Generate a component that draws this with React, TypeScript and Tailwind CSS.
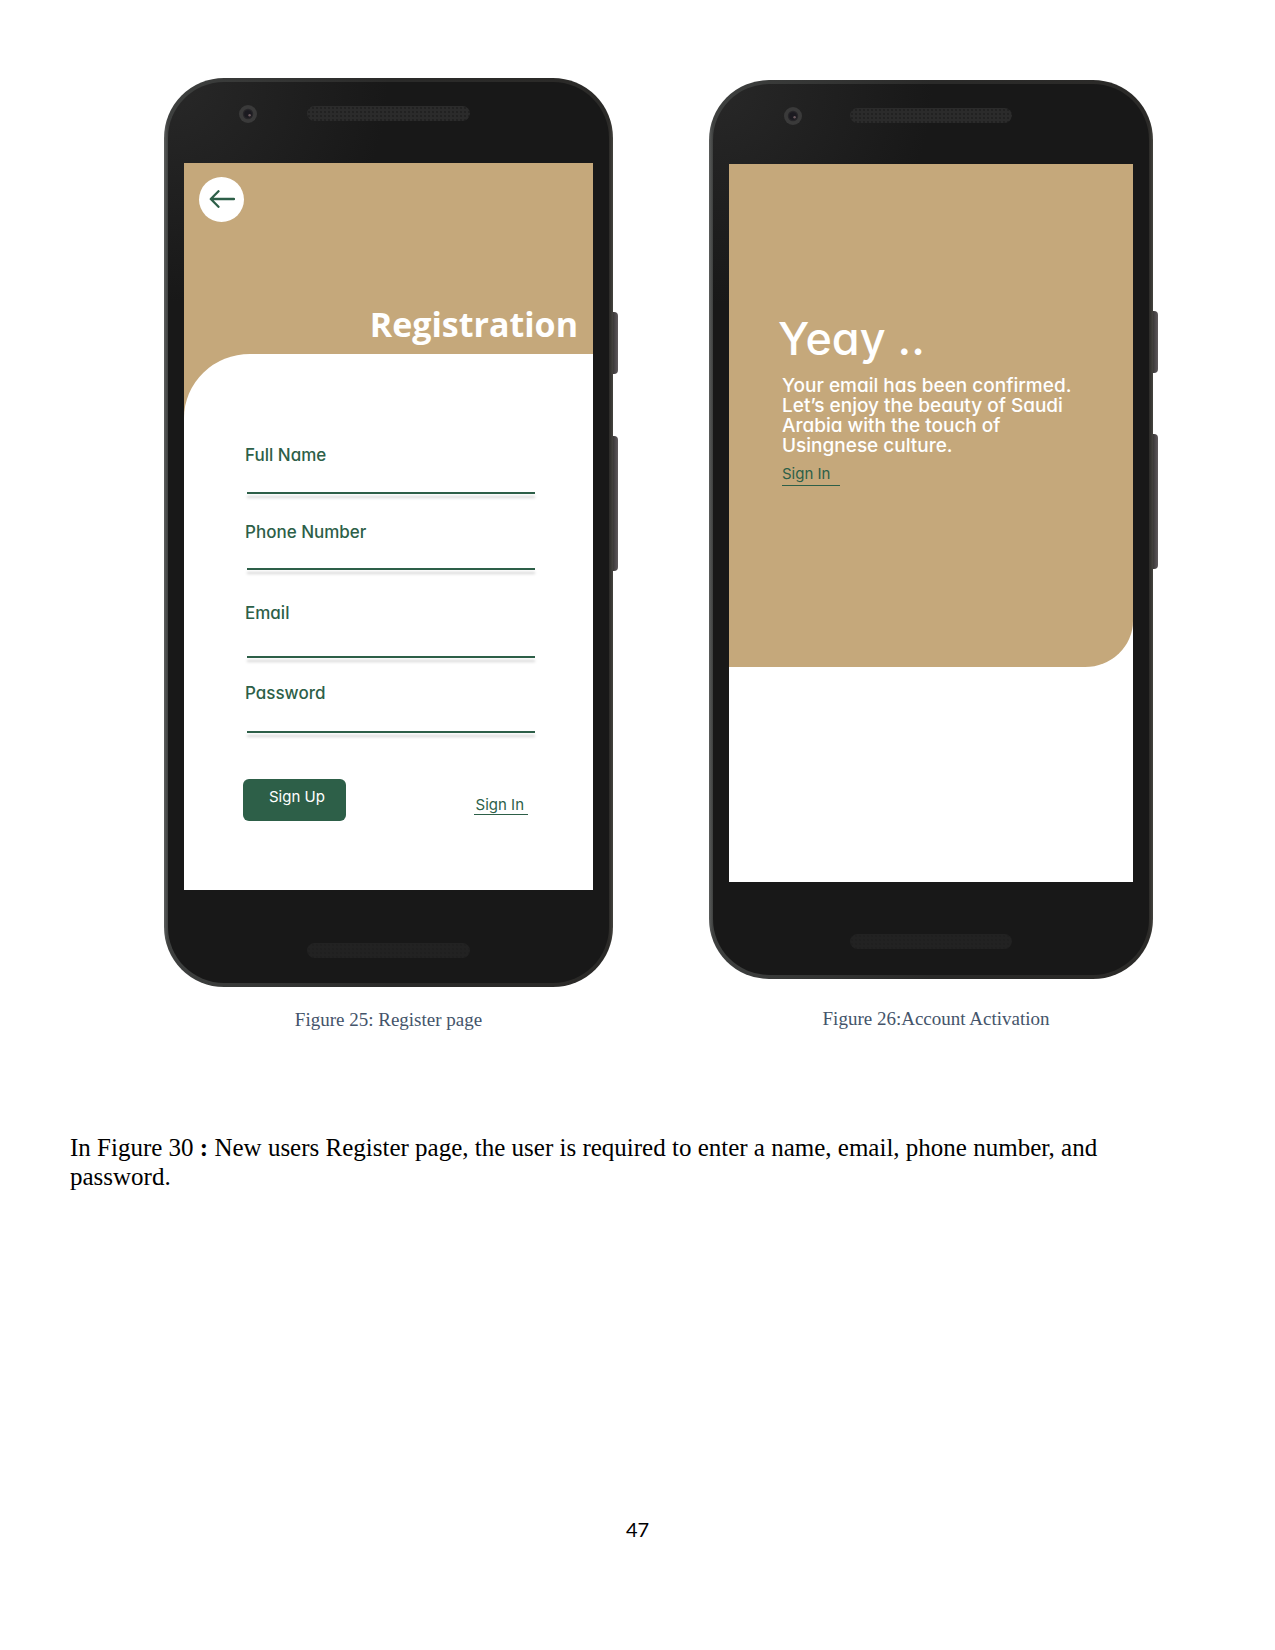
import type { ReactNode } from "react";

type Field = { id: string; label: string; type: string; gap: string; height: string };

const fields: Field[] = [
  { id: "full-name", label: "Full Name", type: "text", gap: "mt-0", height: "h-[27px]" },
  { id: "phone", label: "Phone Number", type: "tel", gap: "mt-7", height: "h-[26px]" },
  { id: "email", label: "Email", type: "email", gap: "mt-[33px]", height: "h-[33px]" },
  { id: "password", label: "Password", type: "password", gap: "mt-[25px]", height: "h-7" },
];

function Speaker({ tone }: { tone: string }) {
  return (
    <div
      className={`h-[15px] w-[40%] rounded-full bg-[radial-gradient(circle,#1f1f1f_0.6px,transparent_1.2px)] bg-[length:4px_4px] ${tone}`}
    />
  );
}

function Camera() {
  return (
    <svg viewBox="0 0 18 18" className="absolute left-[13.5%] size-[18px]" aria-hidden="true">
      <circle cx="9" cy="9" r="9" fill="#3a3a3a" />
      <circle cx="9" cy="9" r="5.2" fill="#262528" />
      <circle cx="9" cy="9" r="3.8" fill="#1b1a20" />
      <circle cx="10.6" cy="10.2" r="1.2" fill="#6d5a5f" />
    </svg>
  );
}

function Phone({ children, top, bottom }: { children: ReactNode; top: string; bottom: string }) {
  return (
    <div className="relative rounded-[60px] bg-[linear-gradient(to_right,#5c5e5d_0px,#3e403f_4px,#2a2a29_50%,#2b2a28_calc(100%-4px),#45443f_100%)] p-1">
      <div className="absolute left-full top-[25.7%] h-[62px] w-[5px] rounded-r-sm bg-[linear-gradient(to_right,#3a3838,#5f5a5d)]" />
      <div className="absolute left-full top-[39.4%] h-[135px] w-[5px] rounded-r-sm bg-[linear-gradient(to_right,#3a3838,#5f5a5d)]" />
      <div className="rounded-[56px] bg-[radial-gradient(circle_at_0_0,#282828,#181818_220px)] px-4">
        <div className={`relative flex items-center justify-center ${top}`}>
          <Camera />
          <Speaker tone="bg-[#2b2b2b]" />
        </div>
        {children}
        <div className={`flex justify-center ${bottom}`}>
          <Speaker tone="bg-[#222222]" />
        </div>
      </div>
    </div>
  );
}

function RegisterScreen() {
  return (
    <div className="bg-[#c5a87b]">
      <div className="flex h-[191px] flex-col justify-between px-[15px] pt-[14px] pb-2.5">
        <button
          type="button"
          aria-label="Back"
          className="flex size-[45px] items-center justify-center rounded-full bg-white pb-0.5"
        >
          <svg
            viewBox="0 0 26 18"
            className="h-[18px] w-[26px]"
            fill="none"
            stroke="#2d5f48"
            strokeWidth="2.3"
            strokeLinecap="round"
            strokeLinejoin="round"
            aria-hidden="true"
          >
            <path d="M25 9H2M9.500 1.200L1.800 9l7.700 7.800" />
          </svg>
        </button>
        <h1 className="text-right font-['Open_Sans',sans-serif] text-[34px] leading-[40px] font-bold text-white">
          Registration
        </h1>
      </div>
      <form
        className="rounded-tl-[66px_64px] bg-white pt-[91px] pr-[58px] pb-[69px] pl-[59px]"
        onSubmit={(e) => e.preventDefault()}
      >
        {fields.map((f) => (
          <div key={f.id} className={`flex flex-col pl-0.5 ${f.gap}`}>
            <label htmlFor={f.id} className="text-[17px] leading-5 font-medium">
              {f.label}
            </label>
            <div className="pl-0.5">
              <input id={f.id} type={f.type} className={`block w-full bg-transparent outline-none ${f.height}`} />
              <div className="h-0.5 bg-[#2d5f48] shadow-[0_4px_3px_rgba(0,0,0,0.18)]" />
            </div>
          </div>
        ))}
        <div className="mt-[46px] flex items-start justify-between pr-[7px]">
          <button
            type="submit"
            className="rounded-md bg-[#2d5f48] pt-2 pr-[21px] pb-3.5 pl-[26px] text-[15px] leading-5 text-white"
          >
            Sign Up
          </button>
          <a href="#sign-in" className="mt-[17px] border-b border-[#2d5f48] pr-1 pl-0.5 text-[15px] leading-[18px]">
            Sign In
          </a>
        </div>
      </form>
    </div>
  );
}

function ActivationScreen() {
  return (
    <div className="bg-white pb-[215px]">
      <div className="h-[503px] rounded-br-[48px_46px] bg-[#c5a87b] pt-[150px] pl-[49px] text-white">
        <h1 className="text-[45px] leading-[50px] font-medium">Yeay ..</h1>
        <div className="pl-1">
          <p className="mt-3 text-[19px] leading-5 font-medium whitespace-nowrap">
            Your email has been confirmed.
            <br />
            Let’s enjoy the beauty of Saudi
            <br />
            Arabia with the touch of
            <br />
            Usingnese culture.
          </p>
          <a
            href="#sign-in"
            className="mt-[7px] inline-block border-b border-[#2d5f48] pr-2.5 text-[15px] leading-[22px] text-[#2d5f48]"
          >
            Sign In
          </a>
        </div>
      </div>
    </div>
  );
}

export default function App() {
  return (
    <main className="min-h-screen bg-white pt-[78px] pb-[109px] font-['Liberation_Serif',serif] text-black">
      <div className="grid grid-cols-[449fr_444fr] items-start gap-24 pr-[122px] pl-[164px]">
        <figure>
          <div className="font-['Inter',sans-serif] text-[#2d5f48] [font-feature-settings:'cv11']">
            <Phone top="pt-6 pb-[42px]" bottom="pt-[53px] pb-[25px]">
              <RegisterScreen />
            </Phone>
          </div>
          <figcaption className="mt-[22px] text-center text-[19px] leading-[22px] text-[#44546a]">
            Figure 25: Register page
          </figcaption>
        </figure>
        <figure className="pt-0.5">
          <div className="font-['Inter',sans-serif] [font-feature-settings:'cv11']">
            <Phone top="pt-6 pb-[41px]" bottom="pt-[52px] pb-[26px]">
              <ActivationScreen />
            </Phone>
          </div>
          <figcaption className="mt-[29px] pl-2.5 text-center text-[19px] leading-[22px] text-[#44546a]">
            Figure 26:Account Activation
          </figcaption>
        </figure>
      </div>
      <p className="mt-[102px] pr-[110px] pl-[70px] text-[25px] leading-[29px]">
        In Figure 30 <b>:</b> New users Register page, the user is required to enter a name, email, phone number, and
        password.
      </p>
      <footer className="mt-[326px] text-center font-['Lato',sans-serif] text-xl leading-6">47</footer>
    </main>
  );
}
